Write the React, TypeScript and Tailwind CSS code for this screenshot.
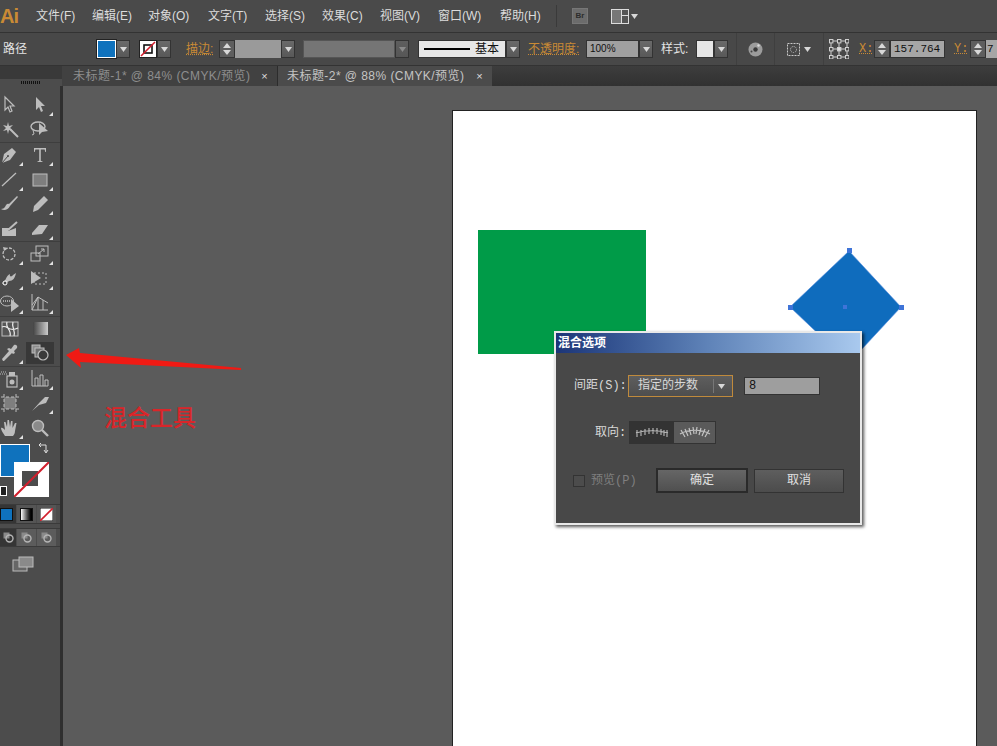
import React from "react";

const ui = { fontFamily: '"Liberation Sans","Noto Sans CJK SC",sans-serif' };
const mono = { fontFamily: '"Liberation Mono","Noto Sans CJK SC",monospace' };

function Caret({ size = 7, color = "#d8d8d8" }: { size?: number; color?: string }) {
  return (
    <svg width={size} height={size - 2} viewBox="0 0 7 5" className="block">
      <path d="M0 0H7L3.5 5Z" fill={color} />
    </svg>
  );
}

function DD({ w = 14, dim = false }: { w?: number; dim?: boolean }) {
  return (
    <div
      style={{ width: w }}
      className={`flex h-[18px] shrink-0 items-center justify-center border border-[#333] bg-gradient-to-b ${dim ? "from-[#5e5e5e] to-[#565656]" : "from-[#6a6a6a] to-[#585858]"}`}
    >
      <Caret color={dim ? "#8a8a8a" : "#d8d8d8"} />
    </div>
  );
}

function Spin() {
  return (
    <div className="flex h-[18px] w-[16px] shrink-0 flex-col items-center justify-center gap-[2px] border border-[#333] bg-[#5e5e5e]">
      <svg width="8" height="5" viewBox="0 0 8 5"><path d="M0 5L4 0L8 5Z" fill="#d8d8d8" /></svg>
      <svg width="8" height="5" viewBox="0 0 8 5"><path d="M0 0L8 0L4 5Z" fill="#d8d8d8" /></svg>
    </div>
  );
}

function Sep({ ml, mr }: { ml: number; mr: number }) {
  return <div style={{ marginLeft: ml, marginRight: mr }} className="h-[32px] w-px shrink-0 bg-[#3f3f3f]" />;
}

const S = "#bdbdbd";
const icons: Record<string, React.ReactNode> = {
  select: <path d="M5 2L5 15L8 12L10 17L12 16L10 11L14 11Z" fill="#4a4a4a" stroke={S} strokeWidth="1.2" />,
  direct: <path d="M6 2L6 15L9 12L11 17L13 16L11 11L15 11Z" fill={S} />,
  wand: <><path d="M10 9L18 17" stroke={S} strokeWidth="2" /><path d="M8 2L9 6L13 5L10 8L13 11L9 10L8 14L7 10L3 11L6 8L3 5L7 6Z" fill={S} /></>,
  lasso: <><ellipse cx="8" cy="6.5" rx="7" ry="4.5" fill="none" stroke={S} strokeWidth="1.4" /><path d="M3 10L4 14L2 15" fill="none" stroke={S} /><path d="M9 3L9 15L12 12L18 11Z" fill={S} /></>,
  pen: <><path d="M2 18L4 9L12 3L16 7L10 15Z" fill={S} /><path d="M2 18L8 11" stroke="#4a4a4a" /><circle cx="8" cy="11" r="1" fill="#4a4a4a" /></>,
  type: <path d="M4 3H16V7H15.3L14.6 4.4H10.8V15.8L12.6 16.4V17H7.4V16.4L9.2 15.8V4.4H5.4L4.7 7H4Z" fill={S} />,
  line: <path d="M2 16L16 3" stroke={S} strokeWidth="1.3" />,
  rect: <rect x="3" y="4" width="14" height="12" fill="#7e7e7e" stroke={S} />,
  brush: <path d="M17 2L9 10C7 9 6 11 5 13C4 14 3 15 1 15C4 17 8 16 10 12L18 3Z" fill={S} />,
  pencil: <path d="M14 2L18 6L8 16L3 18L4 12Z" fill={S} />,
  blob: <><path d="M2 9H10L8 12L16 9V17H2Z" fill={S} /><path d="M8 11L17 3" stroke={S} strokeWidth="2" /></>,
  eraser: <path d="M2 14L9 6H18L12 15L2 16Z" fill={S} />,
  rotate: <><circle cx="9" cy="10" r="6" fill="none" stroke={S} strokeWidth="1.3" strokeDasharray="3 1.6" /><path d="M3 3L8 4L4 7Z" fill={S} /></>,
  scale: <><rect x="1" y="9" width="9" height="8" fill="none" stroke={S} /><rect x="6" y="2" width="12" height="10" fill="none" stroke={S} /><path d="M8 10L14 5M11 5H14V8" fill="none" stroke={S} /></>,
  warp: <><path d="M2 14C6 13 6 6 10 5C9 8 12 8 13 6L16 4C15 9 13 12 9 12L4 16Z" fill={S} /><circle cx="5" cy="14" r="2" fill="#4a4a4a" stroke="#fff" /></>,
  free: <><rect x="4" y="4" width="12" height="11" fill="none" stroke={S} strokeDasharray="2 2" /><path d="M1 2V15L11 9Z" fill={S} /></>,
  symbol: <><ellipse cx="7" cy="8" rx="6.5" ry="5" fill="none" stroke={S} /><path d="M3 8H11" stroke="#fff" strokeDasharray="1 1" /><path d="M11 6V19L19 13Z" fill={S} /></>,
  graph3: <path d="M2 1V17H18M2 12L8 4L18 10M2 17L8 4M8 4V17M13 7V17" fill="none" stroke={S} />,
  mesh: <><rect x="2" y="3" width="16" height="14" fill="#565656" stroke={S} /><path d="M2 8C7 5 9 14 18 9M7 3C5 9 12 11 10 17M13 3C11 8 16 12 14 17" fill="none" stroke="#eee" strokeWidth="1.2" /></>,
  grad: <><defs><linearGradient id="tg" x1="0" x2="1"><stop offset="0" stopColor="#444" /><stop offset="1" stopColor="#ccc" /></linearGradient></defs><rect x="3" y="3" width="15" height="13" fill="url(#tg)" /></>,
  drop: <path d="M3 18L2 16L9 8L7 6L9 5L11 6L14 2C16 1 18 3 17 5L14 8L15 10L13 11L12 10L4 18Z" fill={S} />,
  blend: <><rect x="2" y="2" width="8" height="8" fill="#8c8c8c" stroke={S} /><rect x="5" y="5" width="9" height="9" fill="#6e6e6e" stroke={S} /><circle cx="13" cy="12" r="5" fill="#3a3a3a" stroke={S} strokeWidth="1.2" /></>,
  spray: <><rect x="7" y="7" width="10" height="11" fill="none" stroke={S} strokeWidth="1.2" /><circle cx="12" cy="13" r="2.5" fill={S} /><rect x="9" y="3" width="6" height="4" fill={S} /><path d="M1 3H7M0 5H7" stroke={S} strokeDasharray="1 1" /></>,
  bars: <path d="M2 1V17H18M5 17V9H8V17M10 17V6H13V17M15 17V11H18V17" fill="none" stroke={S} />,
  board: <><rect x="4" y="4" width="12" height="12" fill="#7e7e7e" /><path d="M1 4H19M1 16H19M4 1V19M16 1V19" stroke={S} strokeDasharray="3 2" /></>,
  slice: <path d="M2 18L10 9L15 4H19L16 10L9 12Z" fill={S} />,
  hand: <path d="M5 18C3 15 1 12 1 10C2 9 4 11 5 12L4 4H5.5L7 9L7.5 2H9L10 9L11 3H12.5L12.5 10L15 5H16.5L15 13C15 15 14 17 13 18Z" fill={S} />,
  zoom: <><circle cx="8" cy="8" r="5.5" fill="#8a8a8a" stroke={S} strokeWidth="1.4" /><path d="M12 12L18 18" stroke={S} strokeWidth="2.4" /></>,
};

function Tool({ n, corner = true, active = false }: { n: string; corner?: boolean; active?: boolean }) {
  return (
    <div className={`relative flex h-[22px] w-[28px] items-center justify-center ${active ? "bg-[#383838]" : ""}`}>
      <svg width="20" height="20" viewBox="0 0 20 20">{icons[n]}</svg>
      {corner && (
        <svg width="4" height="4" viewBox="0 0 4 4" className="absolute bottom-0 right-[1px]">
          <path d="M4 0V4H0Z" fill="#e0e0e0" />
        </svg>
      )}
    </div>
  );
}

function Row({ a, b, c = true, d = true, active = false }: { a: string; b: string; c?: boolean; d?: boolean; active?: boolean }) {
  return (
    <div className="ml-[-4px] flex h-[24.5px] items-center gap-[2px]">
      <Tool n={a} corner={c} />
      <Tool n={b} corner={d} active={active} />
    </div>
  );
}

function Rule() {
  return <div className="h-px w-full bg-[#3e3e3e]" />;
}

const menuItems: [string, number][] = [
  ["文件(F)", 56],
  ["编辑(E)", 56],
  ["对象(O)", 60],
  ["文字(T)", 57],
  ["选择(S)", 57],
  ["效果(C)", 58],
  ["视图(V)", 58],
  ["窗口(W)", 62],
  ["帮助(H)", 56],
];

function Menu() {
  return (
    <div className="flex h-[32px] shrink-0 items-center bg-[#4a4a4a] text-[12px] text-[#dcdcdc]">
      <span className="w-[36px] text-[20px] font-bold tracking-[-1px] text-[#c98a35]">Ai</span>
      <div className="flex">
        {menuItems.map(([t, w]) => (
          <span key={t} style={{ width: w }} className="whitespace-nowrap">{t}</span>
        ))}
      </div>
      <div className="h-[22px] w-px bg-[#3a3a3a]" />
      <div className="ml-[15px] flex h-[16px] w-[16px] items-center justify-center border border-[#777] bg-[#6c6c6c] text-[8px] font-bold text-[#2c2c2c]">Br</div>
      <div className="ml-[23px] flex h-[15px] w-[18px] border border-[#ddd]">
        <div className="w-[10px] border-r border-[#ddd] bg-[#777]" />
        <div className="flex-1 bg-[#555]"><div className="h-[6px] border-b border-[#ddd]" /></div>
      </div>
      <div className="ml-[2px]"><Caret /></div>
    </div>
  );
}

function Control() {
  return (
    <div className="flex h-[34px] shrink-0 items-center overflow-hidden border-y border-[#333] bg-[#484848] text-[12px] text-[#e4e4e4]">
      <span className="ml-[3px] w-[94px] shrink-0 text-[12px]">路径</span>
      <div className="h-[18px] w-[19px] shrink-0 border border-white bg-[#0f72bd] outline outline-1 outline-[#222]" />
      <DD />
      <div className="ml-[9px] relative h-[18px] w-[18px] shrink-0 border border-[#222] bg-white">
        <svg width="16" height="16" viewBox="0 0 16 16"><rect x="4" y="4" width="8" height="8" fill="none" stroke="#111" strokeWidth="1.6" /><path d="M1 15L15 1" stroke="#d21f2d" strokeWidth="1.6" /></svg>
      </div>
      <DD />
      <span className="ml-[15px] w-[33px] shrink-0 text-[#c98a35] underline decoration-dotted">描边:</span>
      <Spin />
      <div className="h-[18px] w-[46px] shrink-0 bg-[#9a9a9a]" />
      <DD />
      <div className="ml-[8px] h-[18px] w-[92px] shrink-0 border border-[#555] bg-[#757575]" />
      <DD dim />
      <div className="ml-[9px] flex h-[18px] w-[88px] shrink-0 items-center gap-[5px] border border-[#333] bg-[#e6e6e6] pl-[5px] text-[#111]">
        <div className="h-[2px] w-[46px] bg-black" />
        <span>基本</span>
      </div>
      <DD />
      <span className="ml-[8px] w-[58px] shrink-0 text-[#c98a35] underline decoration-dotted">不透明度:</span>
      <div className="h-[18px] w-[53px] shrink-0 border border-[#333] bg-[#a0a0a0] pl-[3px] text-[10px] leading-[16px] text-[#111]">100%</div>
      <DD />
      <span className="ml-[8px] w-[35px] shrink-0">样式:</span>
      <div className="h-[18px] w-[18px] shrink-0 border border-[#333] bg-[#e6e6e6]" />
      <DD />
      <Sep ml={8} mr={11} />
      <svg width="15" height="15" viewBox="0 0 15 15" className="shrink-0">
        <circle cx="7.5" cy="7.5" r="7" fill="#9c9c9c" />
        <circle cx="7.5" cy="7.5" r="2.2" fill="#3a3a3a" />
        <circle cx="3.5" cy="9.5" r="1" fill="#444" /><circle cx="10.5" cy="3.5" r="1.2" fill="#dcdcdc" />
      </svg>
      <Sep ml={11} mr={12} />
      <svg width="13" height="13" viewBox="0 0 13 13" className="shrink-0">
        <rect x="0.5" y="0.5" width="12" height="12" fill="none" stroke="#c9c9c9" strokeDasharray="2 1" />
        <circle cx="6.5" cy="6.5" r="3" fill="none" stroke="#c9c9c9" strokeDasharray="1 1" />
      </svg>
      <div className="ml-[4px] shrink-0"><Caret /></div>
      <Sep ml={12} mr={5} />
      <svg width="20" height="20" viewBox="0 0 20 20" className="shrink-0">
        {[0, 8, 16].flatMap((y) =>
          [0, 8, 16].map((x) => (
            <rect key={`${x}-${y}`} x={x + 0.5} y={y + 0.5} width="3.4" height="3.4" fill={x === 8 && y === 8 ? "#ddd" : "none"} stroke="#d0d0d0" />
          ))
        )}
        <path d="M4 2H8M12 2H16M4 18H8M12 18H16M2 4V8M2 12V16M18 4V8M18 12V16M10 4V8M10 12V16M4 10H8M12 10H16" stroke="#d0d0d0" />
      </svg>
      <span className="ml-[10px] w-[15px] shrink-0 text-[#c98a35] underline decoration-dotted" style={mono}>X:</span>
      <Spin />
      <div className="h-[18px] w-[55px] shrink-0 border border-[#333] bg-[#a6a6a6] pl-[3px] text-[11px] leading-[16px] text-[#111]" style={mono}>157.764</div>
      <span className="ml-[9px] w-[16px] shrink-0 text-[#c98a35] underline decoration-dotted" style={mono}>Y:</span>
      <Spin />
      <div className="h-[18px] w-[30px] shrink-0 bg-[#a6a6a6] pl-[1px] text-[11px] leading-[18px] text-[#111]" style={mono}>7</div>
    </div>
  );
}

function Tabs() {
  return (
    <div className="flex h-[20px] shrink-0 bg-gradient-to-b from-[#3d3d3d] to-[#313131]">
      <div className="flex w-[62px] shrink-0 flex-col">
        <div className="h-[13px] bg-[#393939]" />
        <div className="flex h-[7px] items-center justify-center bg-[#4c4c4c]">
          <div className="h-[3px] w-[20px] bg-[repeating-linear-gradient(90deg,#111_0,#111_1px,transparent_1px,transparent_2px)]" />
        </div>
      </div>
      <div className="flex h-[20px] w-[216px] items-center border-r border-[#2c2c2c] bg-[#414141] pl-[11px] text-[12px] tracking-[0.45px] text-[#8e8e8e]">
        <span className="whitespace-nowrap">未标题-1* @ 84% (CMYK/预览)</span>
        <span className="ml-auto mr-[9px] text-[11px] text-[#ddd]">×</span>
      </div>
      <div className="flex h-[20px] w-[214px] items-center bg-[#4b4b4b] pl-[9px] text-[12px] tracking-[0.45px] text-[#c4c4c4]">
        <span className="whitespace-nowrap">未标题-2* @ 88% (CMYK/预览)</span>
        <span className="ml-auto mr-[9px] text-[11px] text-[#ddd]">×</span>
      </div>
    </div>
  );
}

function Toolbar() {
  return (
    <aside className="flex h-full w-[63px] shrink-0 flex-col overflow-hidden border-r-[3px] border-[#2f2f2f] bg-[#4c4c4c]">
      <div className="flex flex-col pt-[7px]">
        <Row a="select" b="direct" c={false} />
        <Row a="wand" b="lasso" c={false} d={false} />
        <Rule />
        <Row a="pen" b="type" />
        <Row a="line" b="rect" />
        <Row a="brush" b="pencil" c={false} />
        <Row a="blob" b="eraser" c={false} />
        <Rule />
        <Row a="rotate" b="scale" />
        <Row a="warp" b="free" />
        <Row a="symbol" b="graph3" />
        <Rule />
        <Row a="mesh" b="grad" c={false} d={false} />
        <Row a="drop" b="blend" d={false} active />
        <Rule />
        <Row a="spray" b="bars" />
        <Row a="board" b="slice" c={false} />
        <Row a="hand" b="zoom" d={false} />
      </div>
      <div className="relative mt-[-1px] h-[65px] shrink-0">
        <div className="absolute left-0 top-[5px] h-[33px] w-[30px] border border-white bg-[#0f72bd]" />
        <svg width="35" height="35" viewBox="0 0 35 35" className="absolute left-[14px] top-[23px]">
          <rect x="0" y="0" width="35" height="35" fill="#fff" />
          <rect x="8" y="9" width="16" height="15" fill="#4c4c4c" />
          <path d="M0 35L35 0" stroke="#d21f2d" strokeWidth="2" />
        </svg>
        <svg width="12" height="12" viewBox="0 0 12 12" className="absolute left-[38px] top-[3px]">
          <path d="M1 3H8L8 10M6 8L8 11L10 8M3 1L1 3L3 5" fill="none" stroke="#ddd" />
        </svg>
        <div className="absolute left-0 top-[47px] h-[10px] w-[7px] border border-white bg-[#222]" />
      </div>
      <div className="flex h-[20px] shrink-0 items-center gap-[1px] border-y border-[#3a3a3a]">
        <div className="flex h-[18px] w-[16px] items-center bg-[#353535]"><div className="h-[13px] w-[13px] border border-[#111] bg-[#0f72bd]" /></div>
        <div className="flex h-[18px] w-[19px] items-center justify-center bg-[#555]"><div className="h-[13px] w-[13px] border border-[#111] bg-gradient-to-r from-white to-black" /></div>
        <div className="flex h-[18px] w-[19px] items-center justify-center bg-[#555]">
          <svg width="13" height="13" viewBox="0 0 13 13"><rect width="13" height="13" fill="#fff" stroke="#111" /><path d="M0 13L13 0" stroke="#d21f2d" strokeWidth="1.6" /></svg>
        </div>
      </div>
      <div className="mt-[4px] flex h-[19px] shrink-0 items-center gap-[1px] border-y border-[#3a3a3a]">
        {["w-[16px] bg-[#353535]", "w-[19px] bg-[#5c5c5c]", "w-[19px] bg-[#5c5c5c]"].map((c, i) => (
          <div key={i} className={`flex h-[17px] items-center justify-center ${c}`}>
            <svg width="11" height="11" viewBox="0 0 11 11">
              <rect x="0.5" y="0.5" width="6" height="6" fill="#8a8a8a" />
              <circle cx="6.5" cy="6.5" r="3.5" fill="none" stroke="#b5b5b5" strokeWidth="1.4" />
            </svg>
          </div>
        ))}
      </div>
      <div className="ml-[12px] mt-[9px]">
        <svg width="22" height="16" viewBox="0 0 22 16" className="block">
          <rect x="1" y="4" width="14" height="11" fill="#666" stroke="#bbb" />
          <rect x="7" y="1" width="14" height="10" fill="#8a8a8a" stroke="#bbb" />
        </svg>
      </div>
    </aside>
  );
}

function Dialog() {
  return (
    <div className="absolute left-[101px] top-[220px] h-[194px] w-[308px] border-2 border-[#e8e8e8] bg-[#484848] shadow-[2px_2px_3px_rgba(0,0,0,0.65)]">
      <div className="flex h-[20px] items-center bg-gradient-to-r from-[#1c3578] via-[#5f83b8] to-[#a9c9ee] pl-[2px] text-[12px] font-bold text-white">
        混合选项
      </div>
      <div className="flex flex-col pl-[18px] pt-[22px] text-[12px] text-[#d8d8d8]" style={mono}>
        <div className="flex items-center">
          <span className="w-[54px] whitespace-nowrap">间距(S):</span>
          <div className="flex h-[22px] w-[105px] items-center border border-[#c08a3c] bg-gradient-to-b from-[#5e5e5e] to-[#4e4e4e] pl-[9px]">
            <span className="w-[75px]">指定的步数</span>
            <div className="flex h-[14px] w-[16px] items-center justify-center border-l border-[#777]"><Caret /></div>
          </div>
          <div className="ml-[11px] h-[18px] w-[76px] border border-[#333] bg-[#9e9e9e] pl-[4px] text-[12px] leading-[16px] text-[#111]">8</div>
        </div>
        <div className="mt-[24px] flex items-center pl-[21px]">
          <span className="w-[34px] whitespace-nowrap">取向:</span>
          <div className="flex h-[23px] w-[87px] border border-[#333]">
            <div className="flex w-[44px] items-center justify-center bg-[#333]">
              <svg width="34" height="13" viewBox="0 0 34 13"><path d="M1 7C10 4 24 4 33 7M2 4V11M6 4V10M10 3V9M14 2V8M18 2V8M22 2V8M26 3V9M29 4V10M32 4V11" fill="none" stroke="#b0b0b0" strokeWidth="1.2" /></svg>
            </div>
            <div className="flex flex-1 items-center justify-center bg-[#5a5a5a]">
              <svg width="34" height="13" viewBox="0 0 34 13"><path d="M2 8C10 3 24 3 32 8M3 4L7 11M7 3L10 10M11 2L13 9M15 1L16 8M19 1L18 8M23 2L21 9M27 3L24 10M31 4L27 11" fill="none" stroke="#c4c4c4" strokeWidth="1.2" /></svg>
            </div>
          </div>
        </div>
        <div className="mt-[24px] flex h-[25px] items-center">
          <div className="ml-[-1px] h-[12px] w-[12px] border border-[#333] bg-[#4c4c4c]" />
          <span className="ml-[6px] w-[65px] whitespace-nowrap text-[#7f7f7f]">预览(P)</span>
          <div className="flex h-[25px] w-[92px] items-center justify-center border-2 border-[#2a2a2a] bg-gradient-to-b from-[#666] to-[#505050] text-[#e0e0e0]">确定</div>
          <div className="ml-[6px] flex h-[24px] w-[90px] items-center justify-center border border-[#333] bg-gradient-to-b from-[#5e5e5e] to-[#4c4c4c] text-[#e0e0e0]">取消</div>
        </div>
      </div>
    </div>
  );
}

export default function App() {
  return (
    <div className="relative flex h-[746px] w-[997px] flex-col overflow-hidden bg-[#5b5b5b]" style={ui}>
      <Menu />
      <Control />
      <Tabs />
      <div className="flex min-h-0 flex-1 overflow-hidden">
        <Toolbar />
        <main className="min-w-0 flex-1 pl-[389px] pt-[24px]">
          <div className="relative h-[700px] w-[525px] border border-[#222] bg-white">
            <div className="absolute left-[25px] top-[119px] h-[124px] w-[168px] bg-[#009b48]" />
            <svg width="120" height="110" viewBox="0 0 120 110" className="absolute left-[334px] top-[136px]">
              <path d="M62 4L114 60L62 116L3 60Z" fill="#0f6cbd" stroke="#5b8fe0" strokeWidth="0.6" />
              <rect x="60" y="1" width="5" height="5" fill="#3f74d8" />
              <rect x="1" y="58" width="5" height="5" fill="#3f74d8" />
              <rect x="112" y="58" width="5" height="5" fill="#3f74d8" />
              <rect x="56" y="58" width="4" height="4" fill="#3f74d8" />
            </svg>
            <Dialog />
          </div>
        </main>
      </div>
      <svg width="175" height="32" viewBox="0 0 175 32" className="absolute left-[66px] top-[348px]">
        <path d="M0 7L13 0L14 5L175 20V22L14 14L15 20Z" fill="#f01a14" />
      </svg>
      <span className="absolute left-[104px] top-[403px] text-[23px] font-medium leading-[30px] text-[#d9262a]">混合工具</span>
    </div>
  );
}
